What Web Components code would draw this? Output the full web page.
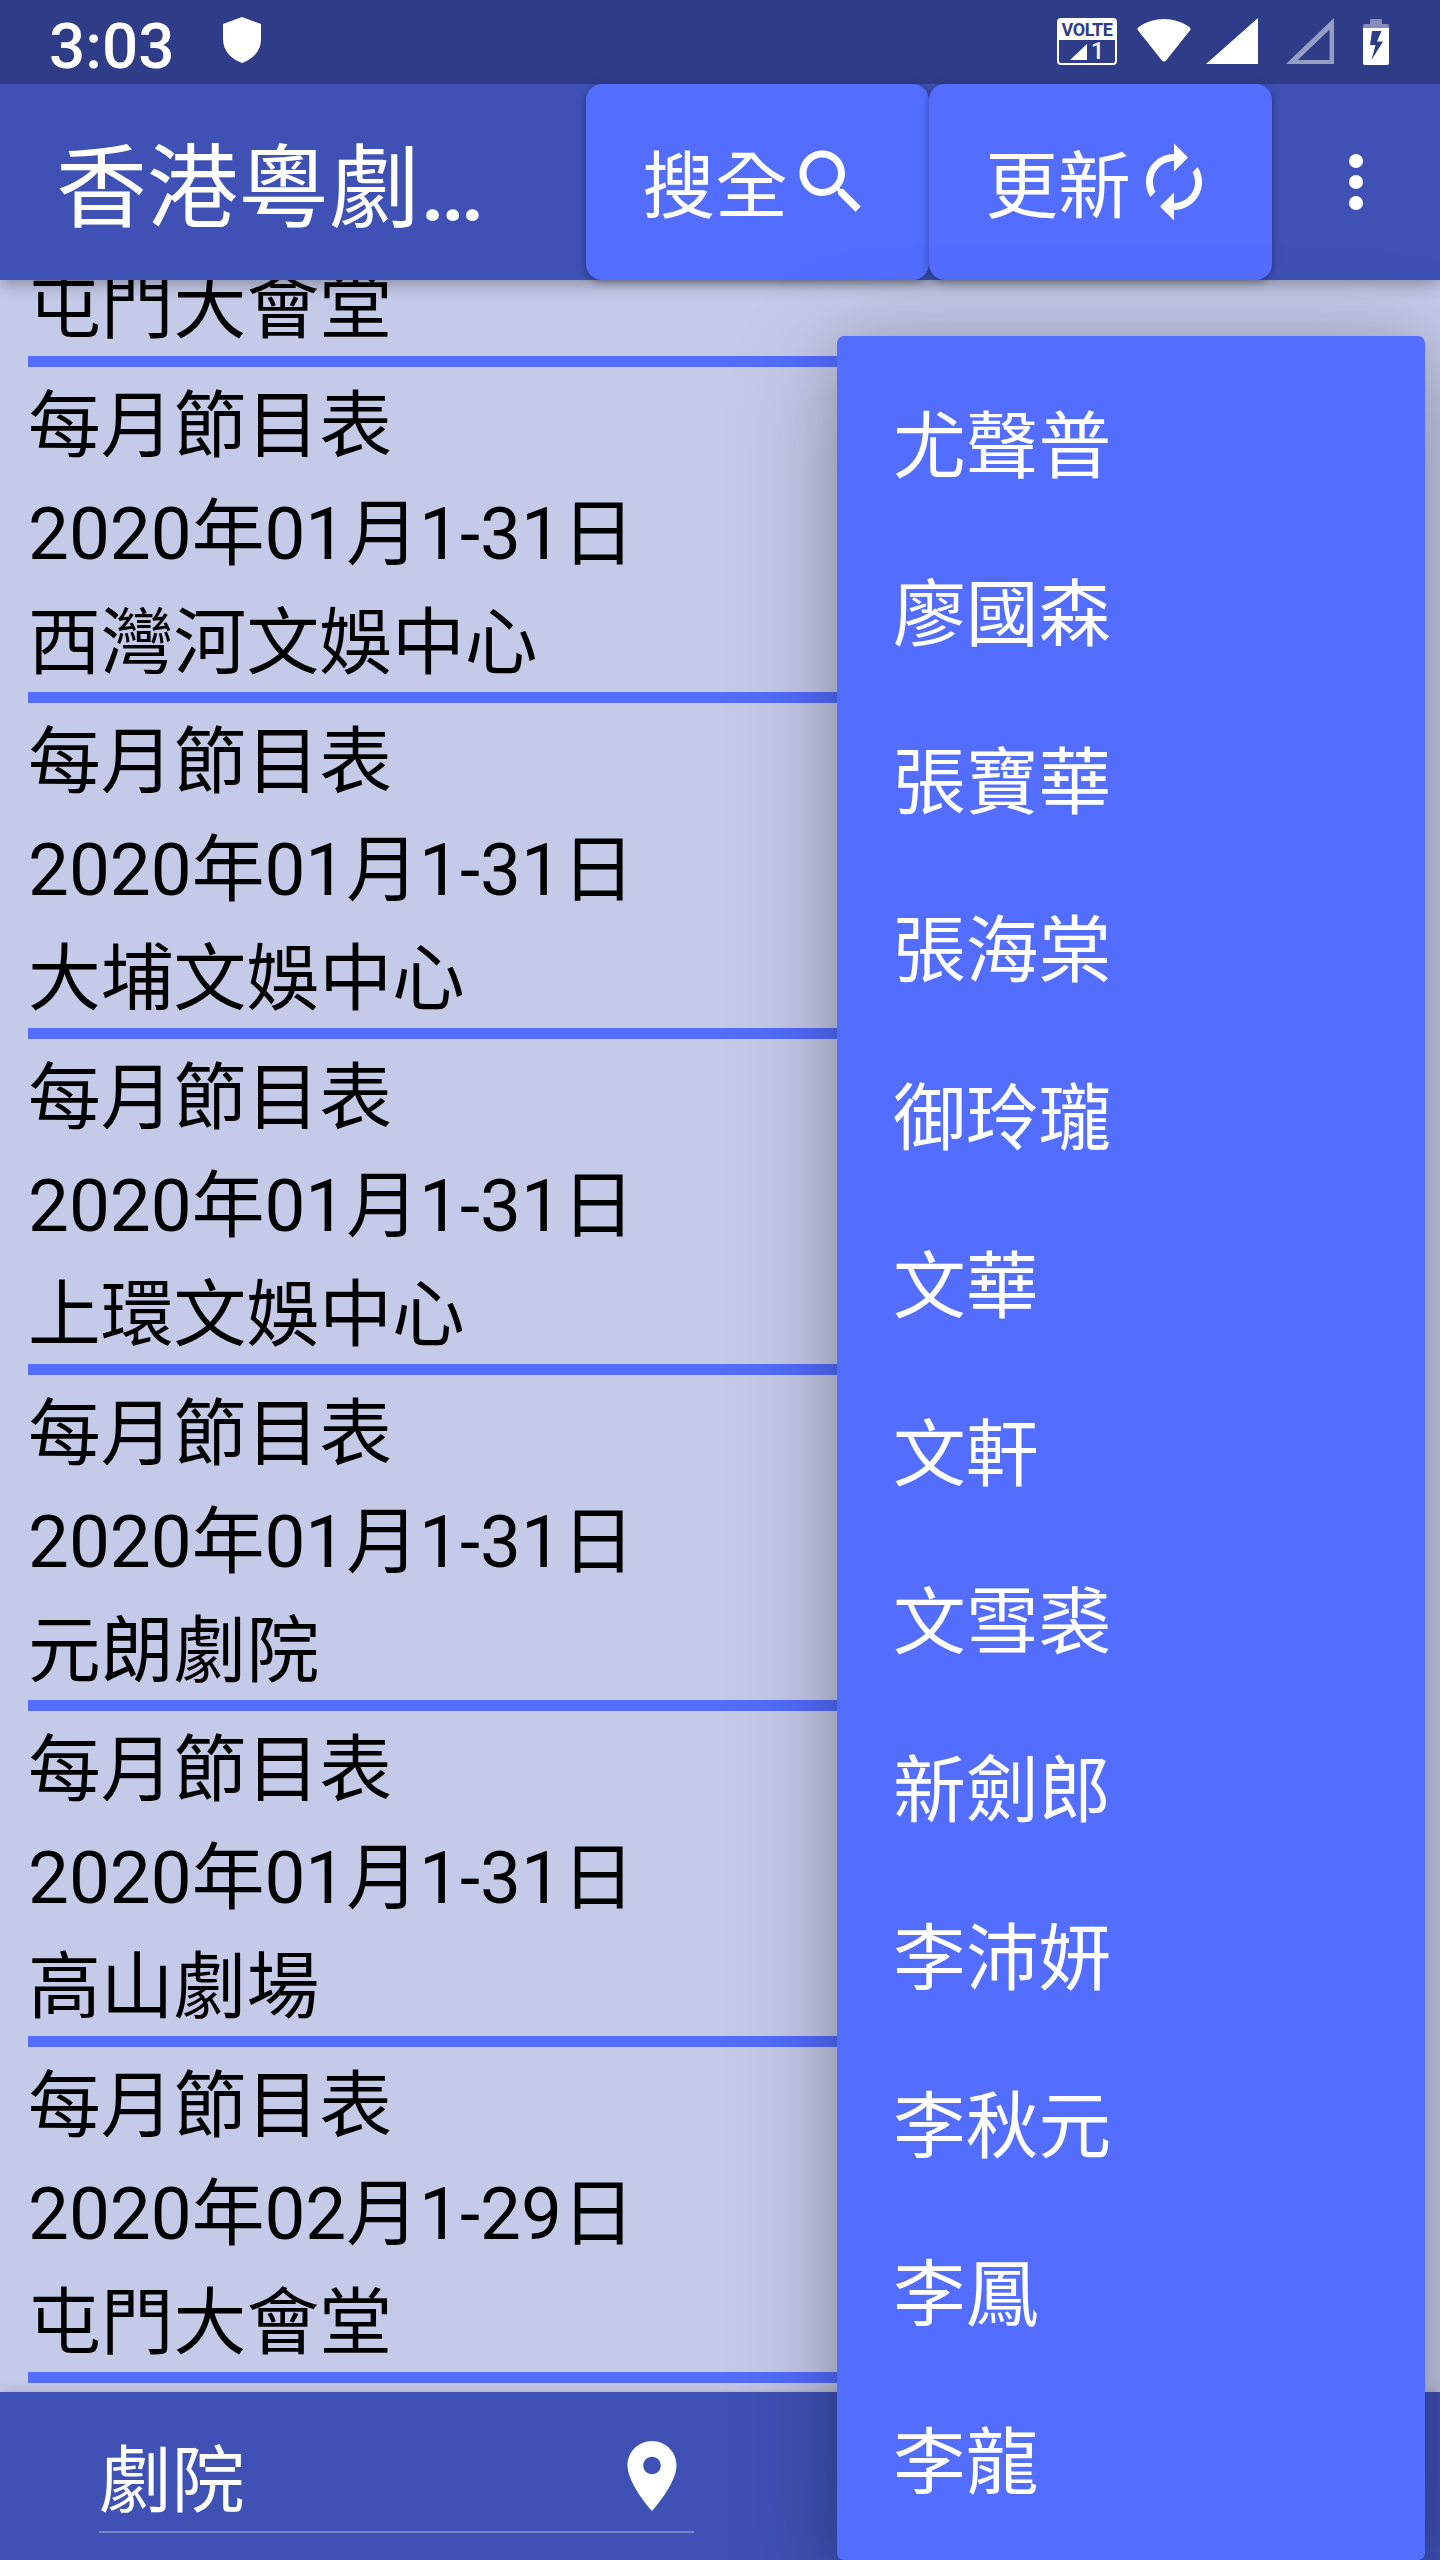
<!DOCTYPE html>
<html lang="zh-Hant">
<head>
<meta charset="UTF-8">
<title>香港粵劇</title>
<style>
    html, body {
        margin: 0;
        height: 100%;
        overflow: hidden;
    }

    body {
        --primary: #3f51b5;
        --primary-dark: #2f3c88;
        --accent: #536dfe;
        --surface: #c5cae9;
        font-family: Roboto, "Noto Sans CJK TC", sans-serif;
        font-size: 72.8px;
        color: #fff;
    }
</style>
</head>
<body>
<opera-app></opera-app>

<script>
// Icon shapes, each on its own viewBox
const ICONS = {
    shield: ['0 0 38 46', '<path d="M19 0 38 7V22C38 34 30 42 19 46 8 42 0 34 0 22V7Z"/>'],
    wifi: ['0 0 54 43', '<path d="M1.500 12Q-.8 10 1.500 8.200C17-2.700 37-2.700 52.500 8.200Q54.800 10 52.500 12L29.500 41Q27 44 24.500 41Z"/>'],
    signal: ['0 0 52 46', '<path d="M52 0V46H0Z"/>'],
    empty: ['0 0 49 46', '<path fill-rule="evenodd" d="M49 0V46H0ZM44.500 11.500 12 42H44.500Z" opacity=".5"/>'],
    battery: ['0 0 26 46', '<path d="M7 0H19V5H24Q26 5 26 7V9H0V7Q0 5 2 5H7Z" opacity=".42"/><path fill-rule="evenodd" d="M0 9H26V44Q26 46 24 46H2Q0 46 0 44ZM9 12 7 26H12.500L8.500 41 20 22.500H14L18.500 12Z"/>'],
    search: ['0 0 24 24', '<path d="M15.500 14h-.79l-.28-.27C15.410 12.590 16 11.110 16 9.500 16 5.910 13.090 3 9.500 3S3 5.910 3 9.500 5.910 16 9.500 16c1.610 0 3.090-.59 4.230-1.570l.27.28v.79l5 4.990L20.490 19l-4.990-5zm-6 0C7.010 14 5 11.990 5 9.500S7.010 5 9.500 5 14 7.010 14 9.500 11.990 14 9.500 14z"/>'],
    renew: ['0 0 24 24', '<path d="M12 6v3l4-4-4-4v3c-4.420 0-8 3.580-8 8 0 1.570.46 3.030 1.240 4.260L6.700 14.800c-.45-.83-.7-1.790-.7-2.800 0-3.310 2.690-6 6-6zm6.760 1.740L17.300 9.200c.44.84.7 1.790.7 2.800 0 3.310-2.690 6-6 6v-3l-4 4 4 4v-3c4.420 0 8-3.580 8-8 0-1.570-.46-3.030-1.240-4.260z"/>'],
    more: ['0 0 24 24', '<circle cx="12" cy="6" r="2"/><circle cx="12" cy="12" r="2"/><circle cx="12" cy="18" r="2"/>'],
    place: ['0 0 24 24', '<path d="M12 2C8.130 2 5 5.130 5 9c0 5.250 7 13 7 13s7-7.750 7-13c0-3.870-3.130-7-7-7zm0 9.500c-1.380 0-2.500-1.120-2.500-2.500s1.120-2.500 2.500-2.500 2.500 1.120 2.500 2.500-1.120 2.500-2.500 2.500z"/>']
};

class AppIcon extends HTMLElement {
    connectedCallback() {
        const [viewBox, shape] = ICONS[this.getAttribute('name')];
        this.attachShadow({ mode: 'open' }).innerHTML = `
            <style>
                :host { display: block; flex: none; width: 84px; height: 84px; }
                svg { display: block; width: 100%; height: 100%; fill: currentColor; }
            </style>
            <svg viewBox="${viewBox}" preserveAspectRatio="none">${shape}</svg>
        `;
    }
}

class VolteBadge extends HTMLElement {
    connectedCallback() {
        this.attachShadow({ mode: 'open' }).innerHTML = `
            <style>
                :host {
                    display: flex;
                    flex-direction: column;
                    box-sizing: border-box;
                    width: 60px;
                    height: 47px;
                    border: 2.5px solid #fff;
                    border-radius: 4px;
                    overflow: hidden;
                }
                .label {
                    height: 20px;
                    background: #fff;
                    color: var(--primary-dark);
                    font-size: 18px;
                    font-weight: 700;
                    line-height: 20px;
                    text-align: center;
                    letter-spacing: -.4px;
                }
                .sim {
                    flex: 1;
                    display: flex;
                    align-items: center;
                    justify-content: center;
                    gap: 4px;
                    font-size: 23px;
                    font-weight: 500;
                    line-height: 22px;
                }
                app-icon { width: 17px; height: 16px; }
            </style>
            <div class="label">VOLTE</div>
            <div class="sim"><app-icon name="signal"></app-icon><span>1</span></div>
        `;
    }
}

class StatusBar extends HTMLElement {
    connectedCallback() {
        this.attachShadow({ mode: 'open' }).innerHTML = `
            <style>
                :host {
                    display: flex;
                    align-items: flex-start;
                    box-sizing: border-box;
                    height: 84px;
                    padding: 17px 51px 0 49px;
                    background: var(--primary-dark);
                }
                .time {
                    width: 174px;
                    margin-top: -8px;
                    font-size: 63.7px;
                    font-weight: 500;
                    line-height: 75px;
                }
                .shield { width: 38px; height: 46px; }
                .right { display: flex; align-items: flex-start; margin-left: auto; }
                volte-badge { margin: 1px 20px 0 0; }
                .wifi { width: 54px; height: 43px; margin: 2px 15px 0 0; }
                .signal { width: 52px; height: 46px; margin: 1px 28px 0 0; }
                .empty { width: 48px; height: 46px; margin: 1px 29px 0 0; }
                .battery { width: 26px; height: 46px; margin-top: 2px; }
            </style>
            <div class="time">3:03</div>
            <app-icon class="shield" name="shield"></app-icon>
            <div class="right">
                <volte-badge></volte-badge>
                <app-icon class="wifi" name="wifi"></app-icon>
                <app-icon class="signal" name="signal"></app-icon>
                <app-icon class="empty" name="empty"></app-icon>
                <app-icon class="battery" name="battery"></app-icon>
            </div>
        `;
    }
}

class ActionButton extends HTMLElement {
    connectedCallback() {
        this.attachShadow({ mode: 'open' }).innerHTML = `
            <style>
                :host {
                    display: flex;
                    align-items: center;
                    justify-content: center;
                    box-sizing: border-box;
                    width: 343px;
                    height: 196px;
                    border-radius: 16px;
                    background: var(--accent);
                    box-shadow: 0 2px 8px rgba(0, 0, 0, .35);
                    cursor: pointer;
                }
                span {
                    margin-right: 1px;
                    padding-top: 10px;
                    line-height: 105px;
                }
            </style>
            <span><slot></slot></span>
            <app-icon name="${this.getAttribute('icon')}"></app-icon>
        `;
    }
}

class AppBar extends HTMLElement {
    connectedCallback() {
        this.attachShadow({ mode: 'open' }).innerHTML = `
            <style>
                :host {
                    display: flex;
                    align-items: center;
                    box-sizing: border-box;
                    height: 196px;
                    padding: 0 42px 0 56px;
                    background: var(--primary);
                }
                h1 {
                    flex: 1;
                    margin: 0;
                    padding-top: 14px;
                    font-size: 91px;
                    font-weight: 400;
                    line-height: 132px;
                    white-space: nowrap;
                }
                .dots { font-weight: 500; }
                .more { margin-left: 42px; }
            </style>
            <h1><slot></slot><span class="dots">…</span></h1>
            <action-button icon="search">搜全</action-button>
            <action-button icon="renew">更新</action-button>
            <app-icon class="more" name="more"></app-icon>
        `;
    }
}

class ProgrammeItem extends HTMLElement {
    connectedCallback() {
        const lines = ['title', 'date', 'venue']
            .filter(key => this.hasAttribute(key))
            .map(key => `<div>${this.getAttribute(key)}</div>`)
            .join('');
        this.attachShadow({ mode: 'open' }).innerHTML = `
            <style>
                :host {
                    display: block;
                    flex: none;
                    color: #000;
                    line-height: 108.5px;
                }
                /* text sits slightly low in its row */
                .lines { padding-top: 5px; margin-bottom: -5px; }
                .rule { height: 10.5px; background: var(--accent); }
            </style>
            <div class="lines">${lines}</div>
            <div class="rule"></div>
        `;
    }
}

class ProgrammeList extends HTMLElement {
    connectedCallback() {
        const monthly = '每月節目表';
        const items = [
            ['2020年01月1-31日', '西灣河文娛中心'],
            ['2020年01月1-31日', '大埔文娛中心'],
            ['2020年01月1-31日', '上環文娛中心'],
            ['2020年01月1-31日', '元朗劇院'],
            ['2020年01月1-31日', '高山劇場'],
            ['2020年02月1-29日', '屯門大會堂']
        ];
        this.attachShadow({ mode: 'open' }).innerHTML = `
            <style>
                :host {
                    display: flex;
                    flex-direction: column;
                    justify-content: flex-end;
                    box-sizing: border-box;
                    padding: 0 28px 9.5px;
                    background: var(--surface);
                    overflow: hidden;
                }
            </style>
            <programme-item venue="屯門大會堂"></programme-item>
            ${items.map(([date, venue]) => `<programme-item title="${monthly}" date="${date}" venue="${venue}"></programme-item>`).join('')}
        `;
    }
}

class FilterBar extends HTMLElement {
    connectedCallback() {
        this.attachShadow({ mode: 'open' }).innerHTML = `
            <style>
                :host {
                    display: block;
                    box-sizing: border-box;
                    height: 168px;
                    padding-left: 99px;
                    background: var(--primary);
                }
                .field {
                    display: flex;
                    align-items: center;
                    justify-content: space-between;
                    box-sizing: border-box;
                    width: 595px;
                    height: 141px;
                    padding: 29px 0 0;
                    border-bottom: 2px solid rgba(255, 255, 255, .3);
                }
                span { padding-bottom: 3px; }
            </style>
            <div class="field">
                <span><slot></slot></span>
                <app-icon name="place"></app-icon>
            </div>
        `;
    }
}

class PopupMenu extends HTMLElement {
    connectedCallback() {
        const names = ['尤聲普', '廖國森', '張寶華', '張海棠', '御玲瓏', '文華', '文軒',
            '文雪裘', '新劍郎', '李沛妍', '李秋元', '李鳳', '李龍'];
        this.attachShadow({ mode: 'open' }).innerHTML = `
            <style>
                :host {
                    display: block;
                    box-sizing: border-box;
                    padding-top: 28px;
                    border-radius: 7px;
                    background: var(--accent);
                    box-shadow: 0 24px 110px rgba(0, 0, 0, .26), 0 6px 50px rgba(0, 0, 0, .12);
                }
                .item {
                    height: 168px;
                    padding-left: 56px;
                    line-height: 166px;
                }
            </style>
            ${names.map(name => `<div class="item">${name}</div>`).join('')}
        `;
    }
}

class OperaApp extends HTMLElement {
    connectedCallback() {
        this.attachShadow({ mode: 'open' }).innerHTML = `
            <style>
                :host {
                    display: flex;
                    flex-direction: column;
                    position: relative;
                    width: 1440px;
                    height: 2560px;
                    overflow: hidden;
                }
                programme-list { flex: 1; min-height: 0; }
                .top, filter-bar { position: relative; }
                .top { box-shadow: 0 4px 16px rgba(0, 0, 0, .32); }
                filter-bar { box-shadow: 0 2px 14px rgba(0, 0, 0, .2); }
                popup-menu {
                    position: absolute;
                    top: 336px;
                    right: 15px;
                    width: 588px;
                    height: 2224px;
                }
            </style>
            <div class="top">
                <status-bar></status-bar>
                <app-bar>香港粵劇</app-bar>
            </div>
            <programme-list></programme-list>
            <filter-bar>劇院</filter-bar>
            <popup-menu></popup-menu>
        `;
    }
}

customElements.define('app-icon', AppIcon);
customElements.define('volte-badge', VolteBadge);
customElements.define('status-bar', StatusBar);
customElements.define('action-button', ActionButton);
customElements.define('app-bar', AppBar);
customElements.define('programme-item', ProgrammeItem);
customElements.define('programme-list', ProgrammeList);
customElements.define('filter-bar', FilterBar);
customElements.define('popup-menu', PopupMenu);
customElements.define('opera-app', OperaApp);
</script>
</body>
</html>
